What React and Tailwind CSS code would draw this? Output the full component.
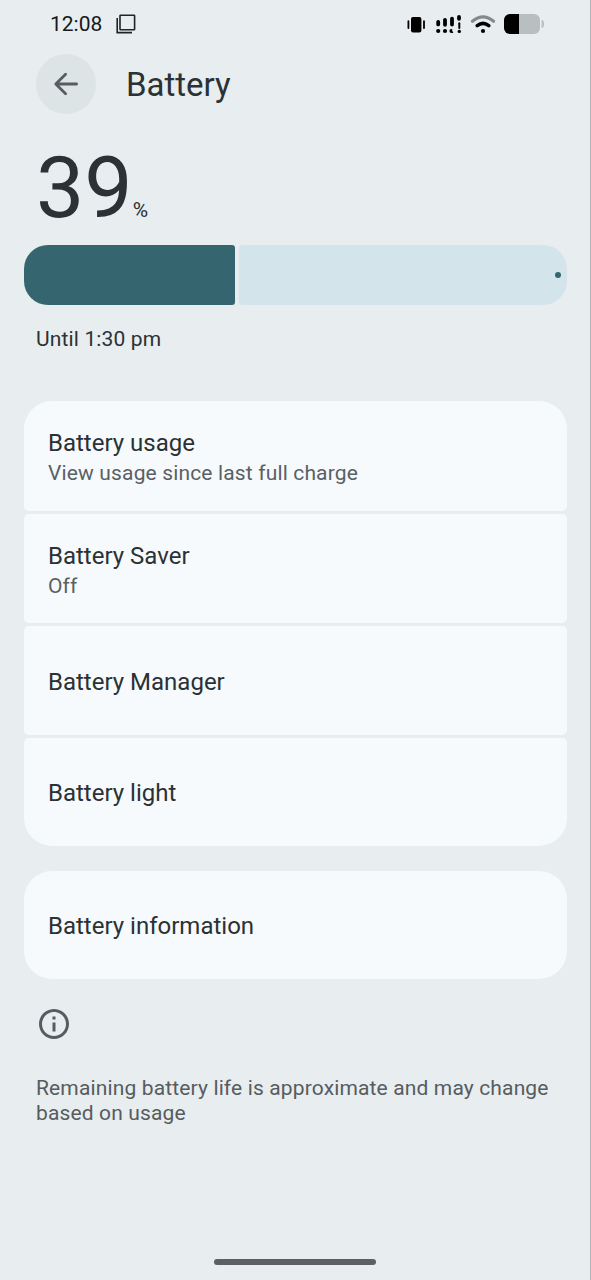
const items = [
  { title: 'Battery usage', summary: 'View usage since last full charge', box: 'h-[109.5px] rounded-t-[28px] rounded-b-[5px] pt-[3px]' },
  { title: 'Battery Saver', summary: 'Off', box: 'h-[109.5px] rounded-[5px] pt-[4px]' },
  { title: 'Battery Manager', box: 'h-[109px] rounded-[5px] pt-[2px]' },
  { title: 'Battery light', box: 'h-[108px] rounded-t-[5px] rounded-b-[28px] pt-[2px]' },
]

function StatusBar() {
  return (
    <div className="flex h-12 items-center pl-[50px] text-black">
      <span className="w-[53px] text-[21px] leading-6 whitespace-nowrap text-[#15191b]">12:08</span>
      <svg className="ml-[12.5px]" width="20" height="20" viewBox="0 0 20 20" fill="none" stroke="#202426" strokeWidth="1.6">
        <rect x="4" y="1.2" width="14.6" height="14.6" rx="0.6" />
        <path d="M1.2 4v14.6H16" />
      </svg>

      {/* Vibrate, signal, wifi and battery */}
      <svg className="-mr-px ml-auto" width="196" height="48" viewBox="0 0 196 48">
        <rect x="16" y="17" width="10.4" height="15.5" rx="2" />
        <path d="M13.4 21.2v6.8M29 21.2v6.8" stroke="#000" strokeWidth="1.8" strokeLinecap="round" />
        <path d="M43.2 21.8v2.6M50 19.8v5M57 18.6v6" stroke="#000" strokeWidth="3.8" strokeLinecap="round" />
        <path d="M64 17v1.8" stroke="#000" strokeWidth="3.8" strokeLinecap="round" />
        <path d="M64.3 23.2v4.8" stroke="#000" strokeWidth="2" strokeLinecap="round" />
        <circle cx="43.2" cy="31" r="2.1" />
        <circle cx="50" cy="31" r="2.1" />
        <path d="M56.5 28.9a2 2 0 0 0 0 4.2h1.6v-1.500h-.9v-2.700z" />
        <circle cx="64.3" cy="31.4" r="1.7" />
        <path d="M77.4 21.2Q88 12.4 98.600 21.200" stroke="#85898b" strokeWidth="3.2" fill="none" strokeLinecap="round" />
        <path d="M82.200 25.700Q88 21.200 93.800 25.700" stroke="#000" strokeWidth="3.600" fill="none" strokeLinecap="round" />
        <circle cx="88" cy="31" r="2.100" />
        <rect x="109" y="14" width="36" height="20" rx="6" fill="#b8bfc1" />
        <path d="M115 14h9v20h-9a6 6 0 0 1-6-6v-8a6 6 0 0 1 6-6z" />
        <path d="M146.600 20q2.400 0 2.400 4t-2.400 4z" fill="#b8bfc1" />
      </svg>
    </div>
  )
}

function Row({ title, summary, box }) {
  return (
    <div className={`flex flex-col justify-center bg-[#f6fafc] px-6 ${box}`}>
      <div className="text-[24px] leading-8">{title}</div>
      {summary && <div className="-mt-px text-[21px] leading-[30px] tracking-[0.15px] text-[#5a6063]">{summary}</div>}
    </div>
  )
}

export default function App() {
  return (
    <div className="flex h-[1280px] w-[591px] flex-col border-r border-[#aeb4b7] bg-[#e8edf0] font-['Roboto',sans-serif] text-[#2b3134]">
      <StatusBar />

      <header className="mt-1.5 flex h-[60px] items-center pl-9">
        <div className="flex size-[60px] items-center justify-center rounded-full bg-[#dde4e6]">
          <svg width="26" height="26" viewBox="0 0 26 26" fill="none" stroke="#565c5f" strokeWidth="2.8" strokeLinecap="round" strokeLinejoin="round">
            <path d="M12.600 3.200 2.800 13l9.800 9.800M3.400 13h20.200" />
          </svg>
        </div>
        <h1 className="ml-[30px] pt-0.5 text-[33px] leading-10">Battery</h1>
      </header>

      <div className="mt-6 flex h-[100px] items-baseline pl-9">
        <span className="text-[86px] leading-[100px]">39</span>
        <span className="text-[21px]">%</span>
      </div>

      <div className="mt-[7px] flex h-[60px] gap-[3.5px] pr-[23px] pl-6">
        <div className="w-[211px] rounded-l-[24px] rounded-r-[3px] bg-[#35666f]" />
        <div className="flex flex-1 items-center justify-end rounded-l-[3px] rounded-r-[24px] bg-[#d3e5ea] pr-1.5">
          <div className="size-1.5 rounded-full bg-[#35666f]" />
        </div>
      </div>
      <p className="mt-[19px] h-[30px] pl-9 text-[21px] leading-[30px] tracking-[0.15px]">Until 1:30 pm</p>

      <div className="mt-[47px] flex flex-col gap-[3px] pr-[23px] pl-6">
        {items.map(item => <Row key={item.title} {...item} />)}
      </div>
      <div className="mt-[25px] pr-[23px] pl-6">
        <Row title="Battery information" box="h-[108px] rounded-[28px] pt-[2px]" />
      </div>

      <svg className="mt-[27px] ml-9" width="36" height="36" viewBox="0 0 24 24" fill="#565c5f">
        <path d="M11 7h2v2h-2zm0 4h2v6h-2zm1-9C6.48 2 2 6.48 2 12s4.48 10 10 10 10-4.48 10-10S17.52 2 12 2zm0 18c-4.41 0-8-3.59-8-8s3.59-8 8-8 8 3.59 8 8-3.59 8-8 8z" />
      </svg>
      <p className="mt-[34px] pl-9 text-[21px] leading-[25px] tracking-[0.14px] whitespace-nowrap text-[#565c5f]">
        Remaining battery life is approximate and may change<br />
        based on usage
      </p>

      <div className="mt-auto mb-[15px] ml-[214px] h-1.5 w-[162px] rounded-full bg-[#5b6063]" />
    </div>
  )
}
